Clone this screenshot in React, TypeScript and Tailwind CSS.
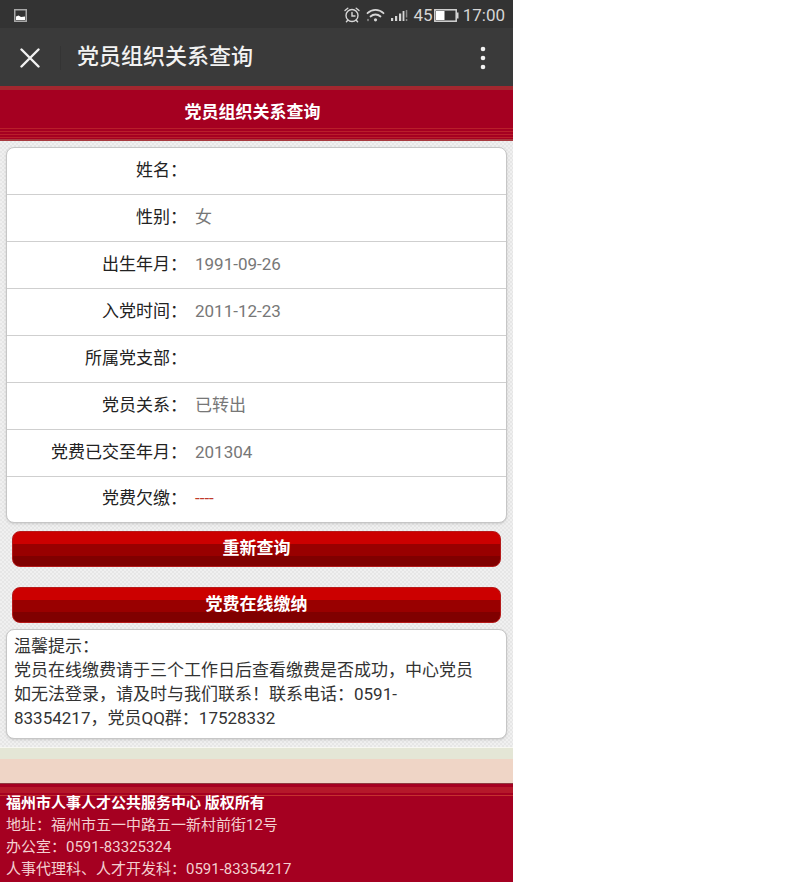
import type { ReactNode } from "react";

type Row = { label: string; value: string; overdue?: boolean };

const rows: Row[] = [
  { label: "姓名", value: "" },
  { label: "性别", value: "女" },
  { label: "出生年月", value: "1991-09-26" },
  { label: "入党时间", value: "2011-12-23" },
  { label: "所属党支部", value: "" },
  { label: "党员关系", value: "已转出" },
  { label: "党费已交至年月", value: "201304" },
  { label: "党费欠缴", value: "----", overdue: true },
];

function StatusBar() {
  return (
    <div className="flex h-7 items-center justify-between bg-[#333333] pt-0.5 pr-2 pl-3.5 text-[#d6d6d6]">
      <svg width="13" height="13" viewBox="0 0 13 13" aria-hidden="true">
        <rect x="0.75" y="0.75" width="11.5" height="11.5" fill="none" stroke="#a8a8a8" strokeWidth="1.5" />
        <path d="M2 11V7.5L4.5 6.5L7 8L11 7.5V11Z" fill="#ffffff" />
      </svg>
      <div className="flex items-center">
        <svg className="mr-1.5" width="16" height="16" viewBox="0 0 16 16" fill="none" stroke="currentColor" strokeWidth="1.4" strokeLinecap="round" aria-hidden="true">
          <circle cx="8" cy="8.5" r="6" />
          <path d="M8 5.5V9H11M1 3.5L3.8 1.2M15 3.5L12.2 1.2M3.8 13.2L2.4 14.8M12.2 13.2L13.6 14.8" />
        </svg>
        <svg className="mr-1.5" width="19" height="15" viewBox="0 0 19 15" fill="none" stroke="currentColor" strokeWidth="1.8" strokeLinecap="round" aria-hidden="true">
          <path d="M1.5 5.2C6 0.8 13 0.8 17.5 5.2M4.5 8.5C7.4 5.8 11.6 5.8 14.5 8.5" />
          <circle cx="9.5" cy="11.8" r="1.6" fill="currentColor" stroke="none" />
          <path d="M2 11.5V12.5" strokeWidth="1.6" stroke="#8a8a8a" />
        </svg>
        <svg className="mr-1.5" width="17" height="13" viewBox="0 0 17 13" fill="currentColor" aria-hidden="true">
          <path d="M0 9H2.2V12H0ZM4 7H6.2V12H4ZM8 4.5H10.2V12H8ZM11.6 2H13.4V12H11.6Z" />
          <path d="M14.8 1H16.3V8.5H14.8ZM14.8 10H16.3V12H14.8Z" fill="#8a8a8a" />
        </svg>
        <span className="text-[17px] leading-6">45</span>
        <svg className="mr-1 ml-px" width="25" height="13" viewBox="0 0 25 13" aria-hidden="true">
          <rect x="0.8" y="0.8" width="21.4" height="11.4" fill="none" stroke="currentColor" strokeWidth="1.5" />
          <rect x="2" y="2" width="8.5" height="9" fill="#ffffff" />
          <rect x="22.5" y="3.5" width="2" height="6" fill="currentColor" />
        </svg>
        <span className="text-[17px] leading-6">17:00</span>
      </div>
    </div>
  );
}

function AppBar() {
  return (
    <div className="flex h-[58px] items-center bg-[#3a3a3a] pt-0.5 pr-4 pl-5 text-[#f2f2f2]">
      <button type="button" aria-label="关闭" className="flex items-center">
        <svg width="20" height="20" viewBox="0 0 20 20" stroke="currentColor" strokeWidth="2.4" strokeLinecap="round" aria-hidden="true">
          <path d="M1.5 1.5L18.5 18.5M18.5 1.5L1.5 18.5" />
        </svg>
      </button>
      <div className="ml-5 h-6 w-px bg-[#343434]" />
      <h1 className="ml-4 flex-1 pb-0.5 text-[22px] leading-6 font-medium">党员组织关系查询</h1>
      <button type="button" aria-label="更多" className="flex w-7 justify-center">
        <svg width="6" height="24" viewBox="0 0 6 24" fill="currentColor" aria-hidden="true">
          <circle cx="3" cy="3" r="2.3" />
          <circle cx="3" cy="12" r="2.3" />
          <circle cx="3" cy="21" r="2.3" />
        </svg>
      </button>
    </div>
  );
}

function RedButton({ children }: { children: ReactNode }) {
  return (
    <button
      type="button"
      className="block h-9 w-full rounded-lg border border-[#b51a1a] bg-[linear-gradient(#cc0000_0_35%,#990000_35%_70%,#800000_70%)] pb-0.5 text-center text-[17px] leading-6 font-bold text-white"
    >
      {children}
    </button>
  );
}

export default function App() {
  return (
    <div className="min-h-screen bg-white">
      <div className="w-full max-w-[513px] font-['Roboto','Noto_Sans_CJK_SC',sans-serif]">
        <StatusBar />
        <AppBar />

        <header className="border-t-4 border-b-2 border-t-[#a3272f] border-b-[#a83a3f] bg-[#a50021]">
          <h2 className="pt-2.5 pr-2 pb-1 text-center text-[17px] leading-6 font-bold text-white">党员组织关系查询</h2>
          <div className="h-[11px] bg-[repeating-linear-gradient(#b91f2a_0_1px,#a50021_1px_3px)]" />
        </header>

        <main className="bg-[#ebebeb] bg-[repeating-conic-gradient(#e6e6e6_0_25%,#f0f0f0_0_50%)] bg-size-[4px_4px] px-1.5 pt-1.5 pb-2">
          <div className="overflow-hidden rounded-lg border border-[#c6c6c6] bg-white shadow-sm">
            <table className="w-full table-fixed border-collapse text-[17px] leading-6">
              <tbody>
                {rows.map((row) => (
                  <tr key={row.label} className="h-[47px] border-b border-[#cfcfcf] first:h-[46px] last:h-[46px] last:border-b-0">
                    <th scope="row" className="w-[180px] p-0 pb-0.5 text-right font-normal text-[#222222]">
                      {row.label}：
                    </th>
                    <td className={row.overdue ? "p-0 pb-0.5 pl-2 text-[#c0392b]" : "p-0 pb-0.5 pl-2 text-[#777777]"}>
                      {row.value}
                    </td>
                  </tr>
                ))}
              </tbody>
            </table>
          </div>

          <div className="flex flex-col gap-5 px-1.5 pt-2 pb-1.5">
            <RedButton>重新查询</RedButton>
            <RedButton>党费在线缴纳</RedButton>
          </div>

          <section className="rounded-lg border border-[#c6c6c6] bg-white pt-1 pr-5 pb-2 pl-[7px] text-[17px] leading-6 text-[#333333] shadow-sm">
            <p>温馨提示：</p>
            <p>
              党员在线缴费请于三个工作日后查看缴费是否成功，中心党员如无法登录，请及时与我们联系！联系电话：0591-
              <wbr />
              83354217，党员QQ群：17528332
            </p>
          </section>
        </main>

        <div className="h-3 border-t border-[#f7f7f2] bg-[#e4e6d6]" />
        <div className="h-6 bg-[#efd5c6]" />

        <footer className="border-t border-[#8f3a40] bg-[#a50021] text-[15px] text-[#f3cfd0]">
          <div className="h-3 bg-[linear-gradient(#a50021_0_3px,#b5182a_3px_9px,#a50021_9px_11px,#c4322f_11px)]" />
          <div className="-mt-1 px-1.5 pb-1 leading-[22px]">
            <p className="font-bold text-white">福州市人事人才公共服务中心 版权所有</p>
            <p>地址：福州市五一中路五一新村前街12号</p>
            <p>办公室：0591-83325324</p>
            <p>人事代理科、人才开发科：0591-83354217</p>
          </div>
        </footer>
      </div>
    </div>
  );
}
